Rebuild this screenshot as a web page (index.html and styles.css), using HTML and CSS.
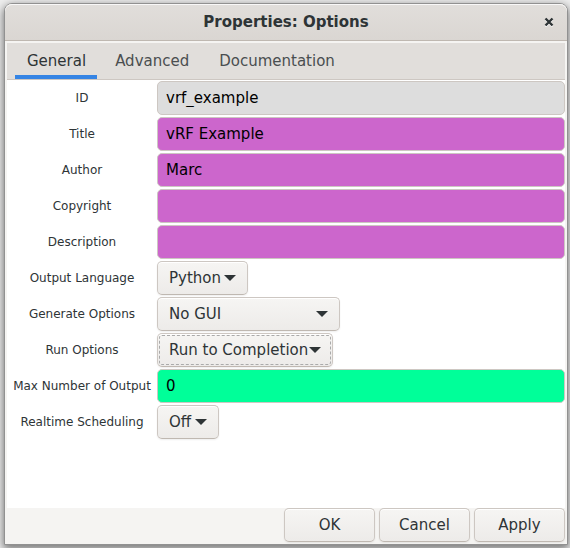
FILE: index.html
```
<!DOCTYPE html>
<html lang="en">
<head>
<meta charset="utf-8">
<title>Properties: Options</title>
<link rel="stylesheet" href="styles.css">
</head>
<body>
<main class="window">
  <header class="titlebar">
    <h1 class="title">Properties: Options</h1>
    <button class="close" type="button" aria-label="Close">
      <svg width="10" height="10" viewBox="0 0 10 10" aria-hidden="true"><path d="M1.5 2.5l7 7M8.5 2.5l-7 7" stroke="#fff" stroke-width="2"/><path d="M1.5 1.5l7 7M8.5 1.5l-7 7" stroke="#2e3436" stroke-width="2.4"/></svg>
    </button>
  </header>
  <form class="content">
    <nav class="tabs">
      <button class="tab active" type="button">General</button>
      <button class="tab" type="button">Advanced</button>
      <button class="tab" type="button">Documentation</button>
    </nav>
    <div class="fields">
      <label for="id">ID</label>
      <input class="entry readonly" id="id" type="text" value="vrf_example" readonly>
      <label for="title">Title</label>
      <input class="entry" id="title" type="text" value="vRF Example">
      <label for="author">Author</label>
      <input class="entry" id="author" type="text" value="Marc">
      <label for="copyright">Copyright</label>
      <input class="entry" id="copyright" type="text">
      <label for="description">Description</label>
      <input class="entry" id="description" type="text">
      <label for="language">Output Language</label>
      <div class="combo language">
        <select id="language"><option>Python</option></select>
        <svg class="arrow" width="12" height="6" viewBox="0 0 12 6" aria-hidden="true"><path d="M0 0h12L6 6z"/></svg>
      </div>
      <label for="generate">Generate Options</label>
      <div class="combo generate">
        <select id="generate"><option>No GUI</option></select>
        <svg class="arrow" width="12" height="6" viewBox="0 0 12 6" aria-hidden="true"><path d="M0 0h12L6 6z"/></svg>
      </div>
      <label for="run">Run Options</label>
      <div class="combo run focused">
        <select id="run"><option>Run to Completion</option></select>
        <svg class="arrow" width="12" height="6" viewBox="0 0 12 6" aria-hidden="true"><path d="M0 0h12L6 6z"/></svg>
      </div>
      <label for="max">Max Number of Output</label>
      <input class="entry number" id="max" type="text" value="0">
      <label for="realtime">Realtime Scheduling</label>
      <div class="combo realtime">
        <select id="realtime"><option>Off</option></select>
        <svg class="arrow" width="12" height="6" viewBox="0 0 12 6" aria-hidden="true"><path d="M0 0h12L6 6z"/></svg>
      </div>
    </div>
    <footer class="actions">
      <button class="action" type="button">OK</button>
      <button class="action" type="button">Cancel</button>
      <button class="action" type="button">Apply</button>
    </footer>
  </form>
</main>
</body>
</html>
```
FILE: styles.css
```
* { box-sizing: border-box; }

body {
  margin: 0;
  padding: 3px 2px 3px 4px;
  height: 100vh;
  overflow: hidden;
  background: #eee;
  color: #2e3436;
  font: 15px/20px "DejaVu Sans", sans-serif;
}

button, input, select { font: inherit; color: inherit; margin: 0; }

.window {
  height: 100%;
  display: flex;
  flex-direction: column;
  border: 1px solid #919191;
  border-radius: 8px 8px 0 0;
  background: #f5f4f2;
  box-shadow: 0 3px 9px 1px rgba(0, 0, 0, 0.5);
}

.titlebar {
  flex: none;
  height: 37px;
  display: grid;
  grid-template-columns: 36px 1fr 36px;
  align-items: center;
  border-bottom: 1px solid #bfb8b1;
  border-radius: 7px 7px 0 0;
  background: linear-gradient(#e1dedb, #dad6d2);
  box-shadow: inset 0 1px #f9f8f8;
}

.title {
  grid-column: 2;
  margin: 0;
  text-align: center;
  font-size: 15px;
  font-weight: bold;
}

.close {
  display: grid;
  place-items: center;
  height: 32px;
  padding: 0;
  border: 0;
  background: none;
}

.content {
  flex: 1;
  display: flex;
  flex-direction: column;
  padding: 2px 2px 2px 2px;
}

.tabs {
  display: flex;
  height: 37px;
  padding: 0 8px;
  gap: 6px;
  background: #e1dedb;
  border-bottom: 1px solid #cdc7c2;
}

.tab {
  padding: 3px 12px 0;
  border: 0;
  border-bottom: 4px solid transparent;
  background: none;
  color: #4a4e50;
}

.tab.active {
  padding: 3px 11px 0 12px;
  border-color: #3584e4;
  color: #2e3436;
}

.fields {
  flex: 1;
  display: grid;
  grid-template-columns: 150px 1fr;
  grid-auto-rows: 34px;
  row-gap: 2px;
  padding-top: 1px;
  background: #fff;
}

.fields label {
  align-self: center;
  text-align: center;
  font-size: 12px;
  white-space: nowrap;
}

.entry {
  width: 100%;
  min-width: 0;
  height: 34px;
  padding: 0 8px;
  border: 1px solid #cdc7c2;
  border-radius: 5px;
  outline: none;
  background: #cc66cc;
  color: #000;
}

.entry.readonly { background: #ddd; }
.entry.number { background: #00ff99; }

.combo {
  display: grid;
  align-items: center;
}

.combo select, .arrow { grid-area: 1 / 1; }

.combo select, .action {
  height: 34px;
  border: 1px solid #cdc7c2;
  border-bottom-color: #bfb8b1;
  border-radius: 5px;
  background: linear-gradient(#f6f5f3, #edebe9);
  box-shadow: inset 0 1px #fff, 0 1px 2px rgba(0, 0, 0, 0.07);
}

.combo select {
  width: 100%;
  padding: 0 0 0 11px;
  appearance: none;
  outline: none;
}

.combo.focused select {
  outline: 1px dashed #aaa;
  outline-offset: -3px;
}

.arrow {
  justify-self: end;
  margin-right: 12px;
  fill: #2e3436;
  pointer-events: none;
}

.language { width: 91px; }
.generate { width: 183px; }
.run { width: 176px; }
.realtime { width: 62px; }

.actions {
  display: flex;
  justify-content: flex-end;
  gap: 4px;
}

.action {
  width: 91px;
  padding: 0;
}
```
